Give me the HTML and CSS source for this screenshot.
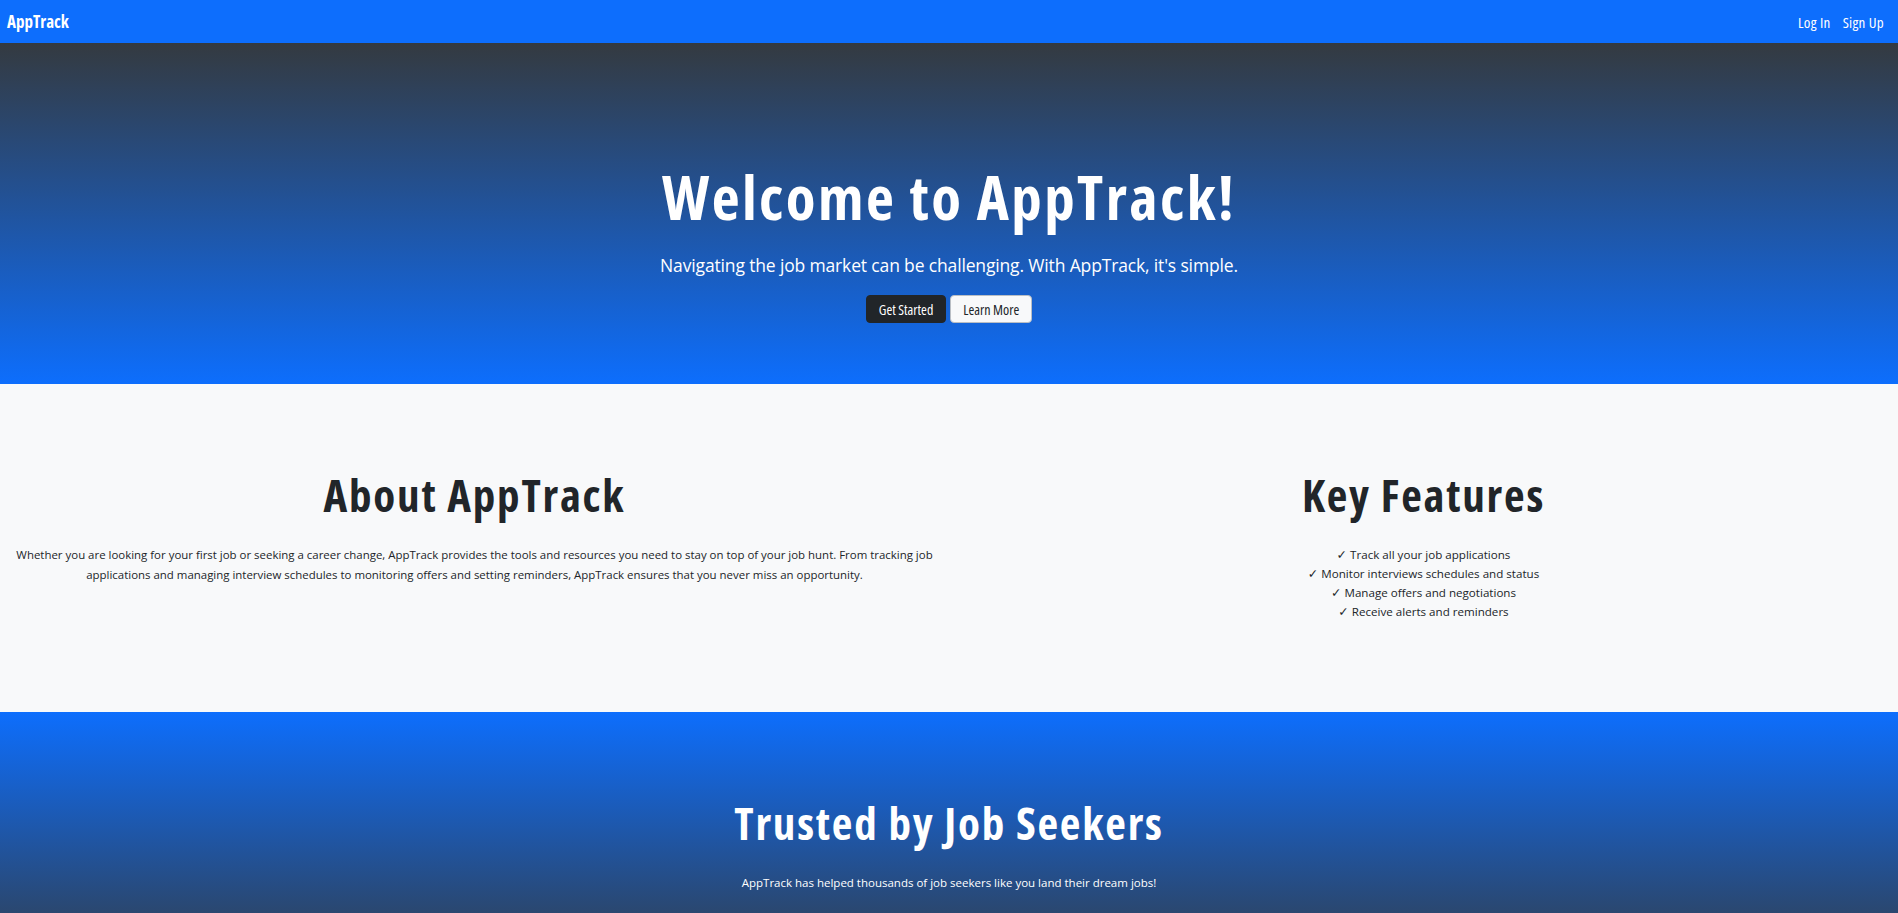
FILE: index.html
```html
<!DOCTYPE html>
<html lang="en">
<head>
<meta charset="utf-8">
<title>AppTrack</title>
<link rel="stylesheet" href="styles.css">
</head>
<body>
<nav class="navbar">
  <a class="brand" href="#">AppTrack</a>
  <div class="nav-links">
    <a href="#">Log In</a>
    <a href="#">Sign Up</a>
  </div>
</nav>

<header class="hero">
  <h1 class="hero-title">Welcome to AppTrack!</h1>
  <p class="hero-lead">Navigating the job market can be challenging. With AppTrack, it's simple.</p>
  <div class="hero-actions">
    <a class="btn btn-dark" href="#">Get Started</a>
    <a class="btn btn-light" href="#">Learn More</a>
  </div>
</header>

<section class="about">
  <div class="col">
    <h2 class="section-title">About AppTrack</h2>
    <p class="about-text">Whether you are looking for your first job or seeking a career change, AppTrack provides the tools and resources you need to stay on top of your job hunt. From tracking job applications and managing interview schedules to monitoring offers and setting reminders, AppTrack ensures that you never miss an opportunity.</p>
  </div>
  <div class="col">
    <h2 class="section-title">Key Features</h2>
    <ul class="features">
      <li><span class="check">✓</span> Track all your job applications</li>
      <li><span class="check">✓</span> Monitor interviews schedules and status</li>
      <li><span class="check">✓</span> Manage offers and negotiations</li>
      <li><span class="check">✓</span> Receive alerts and reminders</li>
    </ul>
  </div>
</section>

<section class="trusted">
  <h2 class="section-title light">Trusted by Job Seekers</h2>
  <p class="trusted-text">AppTrack has helped thousands of job seekers like you land their dream jobs!</p>
</section>
</body>
</html>
```

FILE: styles.css
```css
* { box-sizing: border-box; }

html, body {
  margin: 0;
  padding: 0;
}

body {
  font-family: "Open Sans", "DejaVu Sans", sans-serif;
  font-stretch: 88%;
  color: #212529;
  background: #ffffff;
}

a { text-decoration: none; }

.navbar {
  height: 43px;
  background: #0d6efd;
  display: flex;
  align-items: center;
  justify-content: space-between;
  padding: 0 14px 0 7px;
}

.brand {
  color: #ffffff;
  font-weight: 700;
  font-size: 17px;
  font-stretch: 75%;
}

.nav-links {
  display: flex;
  gap: 12px;
}

.nav-links a {
  color: #ffffff;
  font-size: 15px;
  font-stretch: 75%;
  letter-spacing: 0.3px;
}

.hero {
  height: 341px;
  background: linear-gradient(to bottom, #343a40, #0d6efd);
  display: flex;
  flex-direction: column;
  align-items: center;
  padding-top: 117px;
  color: #ffffff;
}

.hero-title {
  margin: 0;
  font-size: 61px;
  font-weight: 700;
  line-height: 1.2;
  font-stretch: 75%;
  letter-spacing: 2.4px;
}

.hero-lead {
  margin: 19px 0 0;
  font-size: 17.5px;
  line-height: 1.5;
  font-stretch: 88%;
  letter-spacing: -0.15px;
}

.hero-actions {
  display: flex;
  gap: 4px;
  margin-top: 17px;
}

.btn {
  display: inline-flex;
  align-items: center;
  height: 28px;
  padding: 0 12px;
  font-size: 14px;
  font-stretch: 75%;
  border-radius: 4px;
  border: 1px solid transparent;
}

.btn-dark {
  background: #212529;
  color: #ffffff;
  border-color: #212529;
}

.btn-light {
  background: #f8f9fa;
  color: #212529;
  border-color: #b9bec4;
}

.about {
  height: 328px;
  background: #f8f9fa;
  display: grid;
  grid-template-columns: 1fr 1fr;
  padding-top: 84px;
}

.col {
  padding: 0 12px;
  text-align: center;
}

.section-title {
  margin: 0;
  font-size: 45px;
  font-weight: 700;
  line-height: 1.2;
  font-stretch: 75%;
  letter-spacing: 1.8px;
  color: #212529;
}

.section-title.light { color: #ffffff; }

.about-text {
  margin: 23px 0 0;
  font-size: 11.45px;
  line-height: 19.5px;
  font-stretch: 88%;
}

.features {
  list-style: none;
  margin: 23px 0 0;
  padding: 0;
  font-size: 11.6px;
  line-height: 19px;
  font-stretch: 88%;
}

.check {
  font-family: "DejaVu Sans", sans-serif;
  font-size: 12.5px;
  line-height: 1;
}

.trusted {
  height: 268px;
  background: linear-gradient(to bottom, #0d6efd, #343a40);
  display: flex;
  flex-direction: column;
  align-items: center;
  padding-top: 84px;
  color: #ffffff;
}

.trusted-text {
  margin: 23px 0 0;
  font-size: 11.5px;
  line-height: 19px;
  font-stretch: 88%;
}
```
